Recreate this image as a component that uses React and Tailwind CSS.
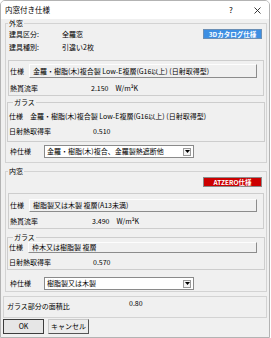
import React from 'react';

const font = "font-['Noto_Sans_CJK_JP','Noto_Sans',sans-serif]";

// 浮き出しボタン風の仕様表示
const SpecButton = ({ children, className }) => (
    <div className={`flex items-center pl-[3px] bg-[#f0f0f0] border border-[#fdfdfd] border-r-[#8c8c8c] border-b-[#8c8c8c] whitespace-nowrap ${className}`}>
        {children}
    </div>
);

const Select = ({ value }) => (
    <div className="w-[150px] h-[13px] flex items-center bg-white border border-[#8a8a8a] pl-[2px] pr-[2px]">
        <span className="flex-1 whitespace-nowrap">{value}</span>
        <span className="w-[8px] h-[8px] flex items-center justify-center border border-[#9a9a9a] bg-[#f4f4f4]">
            <svg width="5" height="3" viewBox="0 0 5 3"><path d="M0 0h5L2.5 3z" fill="#000" /></svg>
        </span>
    </div>
);

const Legend = ({ children, className = 'ml-[2px]' }) => (
    <legend className={`${className} px-[1px] h-[8px] leading-[8px]`}>{children}</legend>
);

const Unit = ({ value }) => (
    <span className="flex items-center">
        <span>{value}</span>
        <span className="ml-[7px]">W/m²K</span>
    </span>
);

export default function App() {
    return (
        <div className={`w-[271px] h-[338px] bg-white ${font} text-[7px] leading-none text-black`}>
            <div className="w-[270px] h-[338px] border border-[#b3b3b3] rounded-t-[5px] bg-[#f0f0f0] flex flex-col overflow-hidden">
                {/* Titelleiste */}
                <div className="h-[18px] bg-white flex items-center">
                    <span className="pl-[4px] flex-1 text-[7.5px]">内窓付き仕様</span>
                    <span className="w-[28px] flex justify-center text-[8px]">?</span>
                    <span className="w-[24px] flex justify-center">
                        <svg width="7" height="7" viewBox="0 0 7 7"><path d="M0.5 0.5l6 6M6.5 0.5l-6 6" stroke="#222" strokeWidth="0.9" /></svg>
                    </span>
                </div>

                {/* 外窓 */}
                <fieldset className="ml-[4px] w-[262px] border border-[#d3d3d3] pt-[2px] pb-[4px]">
                    <Legend>外窓</Legend>
                    <div className="h-[10px] flex items-center pl-[3px] pr-[4px]">
                        <span className="w-[53px]">建具区分:</span>
                        <span className="flex-1">全羅窓</span>
                        <span className="w-[59px] h-[10px] flex items-center justify-center bg-[#3d8fe3] text-white border border-[#6b8fb5] text-[6.5px] font-bold">3Dカタログ仕様</span>
                    </div>
                    <div className="mt-[2px] h-[12px] flex items-center pl-[3px]">
                        <span className="w-[53px]">建具種別:</span>
                        <span>引違い2枚</span>
                    </div>

                    <div className="mt-[7px] ml-[2px] w-[256px] border border-[#cdcdcd] pl-[1px] pt-[3px] pb-[1px]">
                        <div className="flex items-center">
                            <span className="w-[19px]">仕様</span>
                            <SpecButton className="w-[228px] h-[14px]">金羅・樹脂(木)複合製 Low-E複層(G16以上) (日射取得型)</SpecButton>
                        </div>
                        <div className="mt-[4px] h-[12px] flex items-center">
                            <span className="w-[81px]">熱貫流率</span>
                            <Unit value="2.150" />
                        </div>
                    </div>

                    <fieldset className="mt-[2px] ml-[1px] w-[258px] border border-[#cdcdcd] pl-[1px] pt-[4px] pb-[4px]">
                        <Legend className="ml-[4px]">ガラス</Legend>
                        <div className="h-[12px] flex items-center">
                            <span className="w-[21px]">仕様</span>
                            <span className="whitespace-nowrap">金羅・樹脂(木)複合製 Low-E複層(G16以上) (日射取得型)</span>
                        </div>
                        <div className="mt-[3px] h-[12px] flex items-center">
                            <span className="w-[84px]">日射熱取得率</span>
                            <span>0.510</span>
                        </div>
                    </fieldset>

                    <div className="mt-[3px] flex items-center pl-[4px]">
                        <span className="w-[34px]">枠仕様</span>
                        <Select value="金羅・樹脂(木)複合、金羅製熱遮断他" />
                    </div>
                </fieldset>

                {/* 内窓 */}
                <fieldset className="mt-[4px] ml-[4px] w-[262px] border border-[#d3d3d3] pt-[2px] pb-[1px]">
                    <Legend>内窓</Legend>
                    <div className="h-[10px] flex justify-end pr-[4px]">
                        <span className="w-[59px] h-[10px] flex items-center justify-center bg-[#cc0000] text-white border border-[#8a8a8a] text-[6.5px] font-bold">ATZERO仕様</span>
                    </div>

                    <div className="mt-[6px] ml-[2px] w-[256px] border border-[#cdcdcd] pl-[1px] pt-[5px] pb-[1px]">
                        <div className="flex items-center">
                            <span className="w-[19px]">仕様</span>
                            <SpecButton className="w-[228px] h-[13px]">樹脂製又は木製 複層(A13未満)</SpecButton>
                        </div>
                        <div className="mt-[3px] h-[12px] flex items-center">
                            <span className="w-[82px]">熱貫流率</span>
                            <Unit value="3.490" />
                        </div>
                    </div>

                    <fieldset className="mt-[4px] ml-[1px] w-[258px] border border-[#cdcdcd] pl-[1px] pt-[1px] pb-[1px]">
                        <Legend className="ml-[4px]">ガラス</Legend>
                        <div className="flex items-center">
                            <span className="w-[19px]">仕様</span>
                            <SpecButton className="w-[229px] h-[11px]">枠木又は樹脂製 複層</SpecButton>
                        </div>
                        <div className="mt-[3px] h-[12px] flex items-center">
                            <span className="w-[84px]">日射熱取得率</span>
                            <span>0.570</span>
                        </div>
                    </fieldset>

                    <div className="mt-[7px] flex items-center pl-[4px]">
                        <span className="w-[34px]">枠仕様</span>
                        <Select value="樹脂製又は木製" />
                    </div>
                </fieldset>

                {/* 面積比 */}
                <div className="mt-[4px] ml-[2px] w-[264px] h-[22px] border border-[#d3d3d3] flex items-start pl-[3px]">
                    <span className="mt-[6px] w-[122px]">ガラス部分の面積比</span>
                    <span className="mt-[3px]">0.80</span>
                </div>

                <div className="mt-[1px] ml-[2px] flex gap-[4px]">
                    <button className="w-[41px] h-[15px] flex items-center justify-center bg-[#e6e6e6] border border-[#3c3c3c]">OK</button>
                    <button className="w-[41px] h-[15px] flex items-center justify-center bg-[#ececec] border border-[#c8c8c8] border-r-[#555] border-b-[#555]">キャンセル</button>
                </div>
            </div>
        </div>
    );
}
